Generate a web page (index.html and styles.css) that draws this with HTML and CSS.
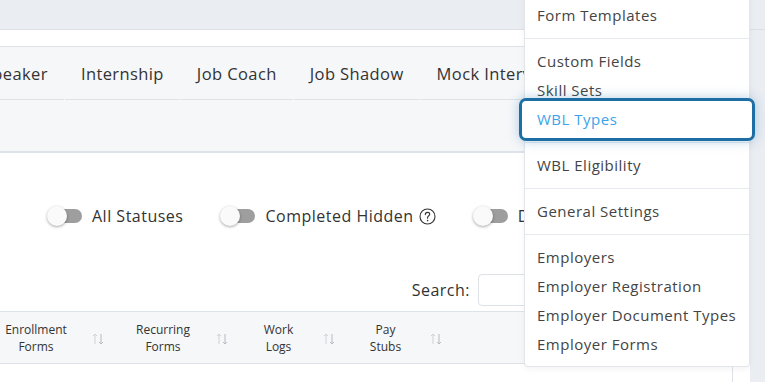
FILE: index.html
```html
<!DOCTYPE html>
<html>
<head>
    <title>WBL Settings</title>
    <link rel="stylesheet" href="styles.css">
</head>
<body>
    <div class="topbar"></div>
    <div class="card">
        <div class="tabs">
            <div class="tab first">Guest Speaker</div>
            <div class="tab">Internship</div>
            <div class="tab">Job Coach</div>
            <div class="tab">Job Shadow</div>
            <div class="tab">Mock Interview</div>
            <div class="tab">Site Visit</div>
        </div>
        <div class="tab-pane"></div>

        <div class="filters">
            <label class="switch"><span class="track"></span><span class="knob"></span></label>
            <span class="filter-label">All Statuses</span>
            <label class="switch"><span class="track"></span><span class="knob"></span></label>
            <span class="filter-label">Completed Hidden
                <svg class="help" width="17" height="17" viewBox="0 0 17 17">
                    <circle cx="8.5" cy="8.5" r="7.5" fill="none" stroke="#333" stroke-width="1.1"/>
                    <path d="M6.3 6.6 C6.3 5.2 7.3 4.4 8.5 4.4 C9.8 4.4 10.7 5.2 10.7 6.3 C10.7 7.6 8.6 7.9 8.6 9.6 L8.6 10.3" fill="none" stroke="#333" stroke-width="1.1" stroke-linecap="round"/>
                    <circle cx="8.6" cy="12.6" r="0.8" fill="#333"/>
                </svg>
            </span>
            <label class="switch"><span class="track"></span><span class="knob"></span></label>
            <span class="filter-label">Dropped Hidden</span>
        </div>

        <div class="search-row">
            <span class="search-label">Search:</span>
            <input class="search-input" type="text">
        </div>

        <div class="table">
            <div class="th first-col">Enrollment<br>Forms<svg class="sort" width="12" height="12" viewBox="0 0 12 12"><path d="M3 11V1M1 3L3 1L5 3" fill="none" stroke="#cdd2d7" stroke-width="1"/><path d="M9 1V11M7 9L9 11L11 9" fill="none" stroke="#b6bcc2" stroke-width="1"/></svg></div>
            <div class="th">Recurring<br>Forms<svg class="sort" width="12" height="12" viewBox="0 0 12 12"><path d="M3 11V1M1 3L3 1L5 3" fill="none" stroke="#cdd2d7" stroke-width="1"/><path d="M9 1V11M7 9L9 11L11 9" fill="none" stroke="#b6bcc2" stroke-width="1"/></svg></div>
            <div class="th">Work<br>Logs<svg class="sort" width="12" height="12" viewBox="0 0 12 12"><path d="M3 11V1M1 3L3 1L5 3" fill="none" stroke="#cdd2d7" stroke-width="1"/><path d="M9 1V11M7 9L9 11L11 9" fill="none" stroke="#b6bcc2" stroke-width="1"/></svg></div>
            <div class="th">Pay<br>Stubs<svg class="sort" width="12" height="12" viewBox="0 0 12 12"><path d="M3 11V1M1 3L3 1L5 3" fill="none" stroke="#cdd2d7" stroke-width="1"/><path d="M9 1V11M7 9L9 11L11 9" fill="none" stroke="#b6bcc2" stroke-width="1"/></svg></div>
            <div class="th last"></div>
        </div>
        <div class="table-body"></div>
    </div>

    <div class="dropdown">
        <div class="menu-item">Form Templates</div>
        <div class="divider"></div>
        <div class="menu-item">Custom Fields</div>
        <div class="menu-item">Skill Sets</div>
        <div class="menu-item active">WBL Types</div>
        <div class="divider"></div>
        <div class="menu-item">WBL Eligibility</div>
        <div class="divider"></div>
        <div class="menu-item">General Settings</div>
        <div class="divider"></div>
        <div class="menu-item">Employers</div>
        <div class="menu-item">Employer Registration</div>
        <div class="menu-item">Employer Document Types</div>
        <div class="menu-item">Employer Forms</div>
    </div>
</body>
</html>
```

FILE: styles.css
```css
body {
    margin: 0;
    font-family: "Open Sans", "Noto Sans", sans-serif;
    background-color: #eaedf2;
    color: #333;
    overflow: hidden;
    height: 382px;
}
.topbar {
    height: 29px;
    border-bottom: 1px solid #dcdfe4;
}
.card {
    width: 733px;
    padding-top: 16px;
    padding-right: 17px;
    background: white;
    height: 336px;
    overflow: hidden;
}
.tabs {
    display: flex;
    gap: 1px;
    height: 53px;
    border-top: 1px solid #dde2e7;
    background-color: #f6f7f9;
    overflow: hidden;
}
.tab {
    flex-shrink: 0;
    padding: 0 16px;
    line-height: 54px;
    height: 52px;
    font-size: 16.5px;
    font-weight: 500;
    letter-spacing: 0.4px;
    color: #333;
    border-bottom: 1px solid #dde2e7;
    white-space: nowrap;
}
.tab.first {
    margin-left: -85px;
}
.tab-pane {
    height: 51px;
    background-color: #f6f7f9;
    border-bottom: 2px solid #dde3e8;
}
.filters {
    display: flex;
    align-items: center;
    height: 20px;
    margin-top: 53px;
    padding-left: 47px;
}
.switch {
    position: relative;
    flex-shrink: 0;
    width: 35px;
    height: 20px;
    margin-right: 10px;
}
.track {
    position: absolute;
    left: 8px;
    top: 3px;
    width: 27px;
    height: 14px;
    border-radius: 7px;
    background-color: #9e9e9e;
}
.knob {
    position: absolute;
    left: 0;
    top: 0;
    width: 20px;
    height: 20px;
    border-radius: 50%;
    background-color: #fafafa;
    box-shadow: 0 1px 3px rgba(0, 0, 0, 0.35);
}
.filter-label {
    display: flex;
    align-items: center;
    gap: 5px;
    font-size: 16px;
    letter-spacing: 0.5px;
    margin-right: 37px;
    white-space: nowrap;
}
.search-row {
    display: flex;
    justify-content: flex-end;
    align-items: center;
    gap: 8px;
    margin-top: 48px;
}
.search-label {
    font-size: 16px;
    letter-spacing: 0.5px;
}
.search-input {
    width: 255px;
    height: 32px;
    box-sizing: border-box;
    border: 1px solid #dee2e6;
    border-radius: 4px;
    margin: 0;
}
.table {
    display: grid;
    grid-template-columns: 118px 124px 107px 107px 1fr;
    margin-top: 5px;
    height: 51px;
    background-color: #f5f7f9;
    border-top: 1px solid #dde3e8;
    border-bottom: 1px solid #dde3e8;
}
.th {
    position: relative;
    display: flex;
    align-items: center;
    justify-content: center;
    padding-right: 34px;
    font-size: 12px;
    font-weight: 500;
    line-height: 17px;
    text-align: center;
    color: #333;
}
.th.first-col {
    padding-right: 46px;
}
.th.last {
    border-right: 1px solid #dee2e6;
}
.sort {
    position: absolute;
    right: 14px;
    top: 21px;
}
.table-body {
    height: 30px;
    border-right: 1px solid #dee2e6;
}
.dropdown {
    position: absolute;
    left: 524px;
    top: -8px;
    width: 224px;
    padding: 8px 0 7px;
    background: white;
    border: 1px solid #e2e5e9;
    border-radius: 4px;
    box-shadow: 0 2px 6px rgba(0, 0, 0, 0.05);
}
.menu-item {
    height: 29px;
    line-height: 29px;
    padding-left: 12px;
    font-size: 15px;
    letter-spacing: 0.5px;
    color: #444;
    white-space: nowrap;
}
.menu-item.active {
    position: relative;
    margin: -7px -6px;
    height: 43px;
    line-height: 37px;
    padding-left: 15px;
    border: 3px solid #1c6ea5;
    border-radius: 7px;
    background: white;
    color: #3ba3ec;
    box-shadow: 0 0 12px rgba(40, 120, 180, 0.35);
    box-sizing: border-box;
}
.divider {
    height: 1px;
    margin: 8px 0;
    background-color: #e6e9ed;
}
```
